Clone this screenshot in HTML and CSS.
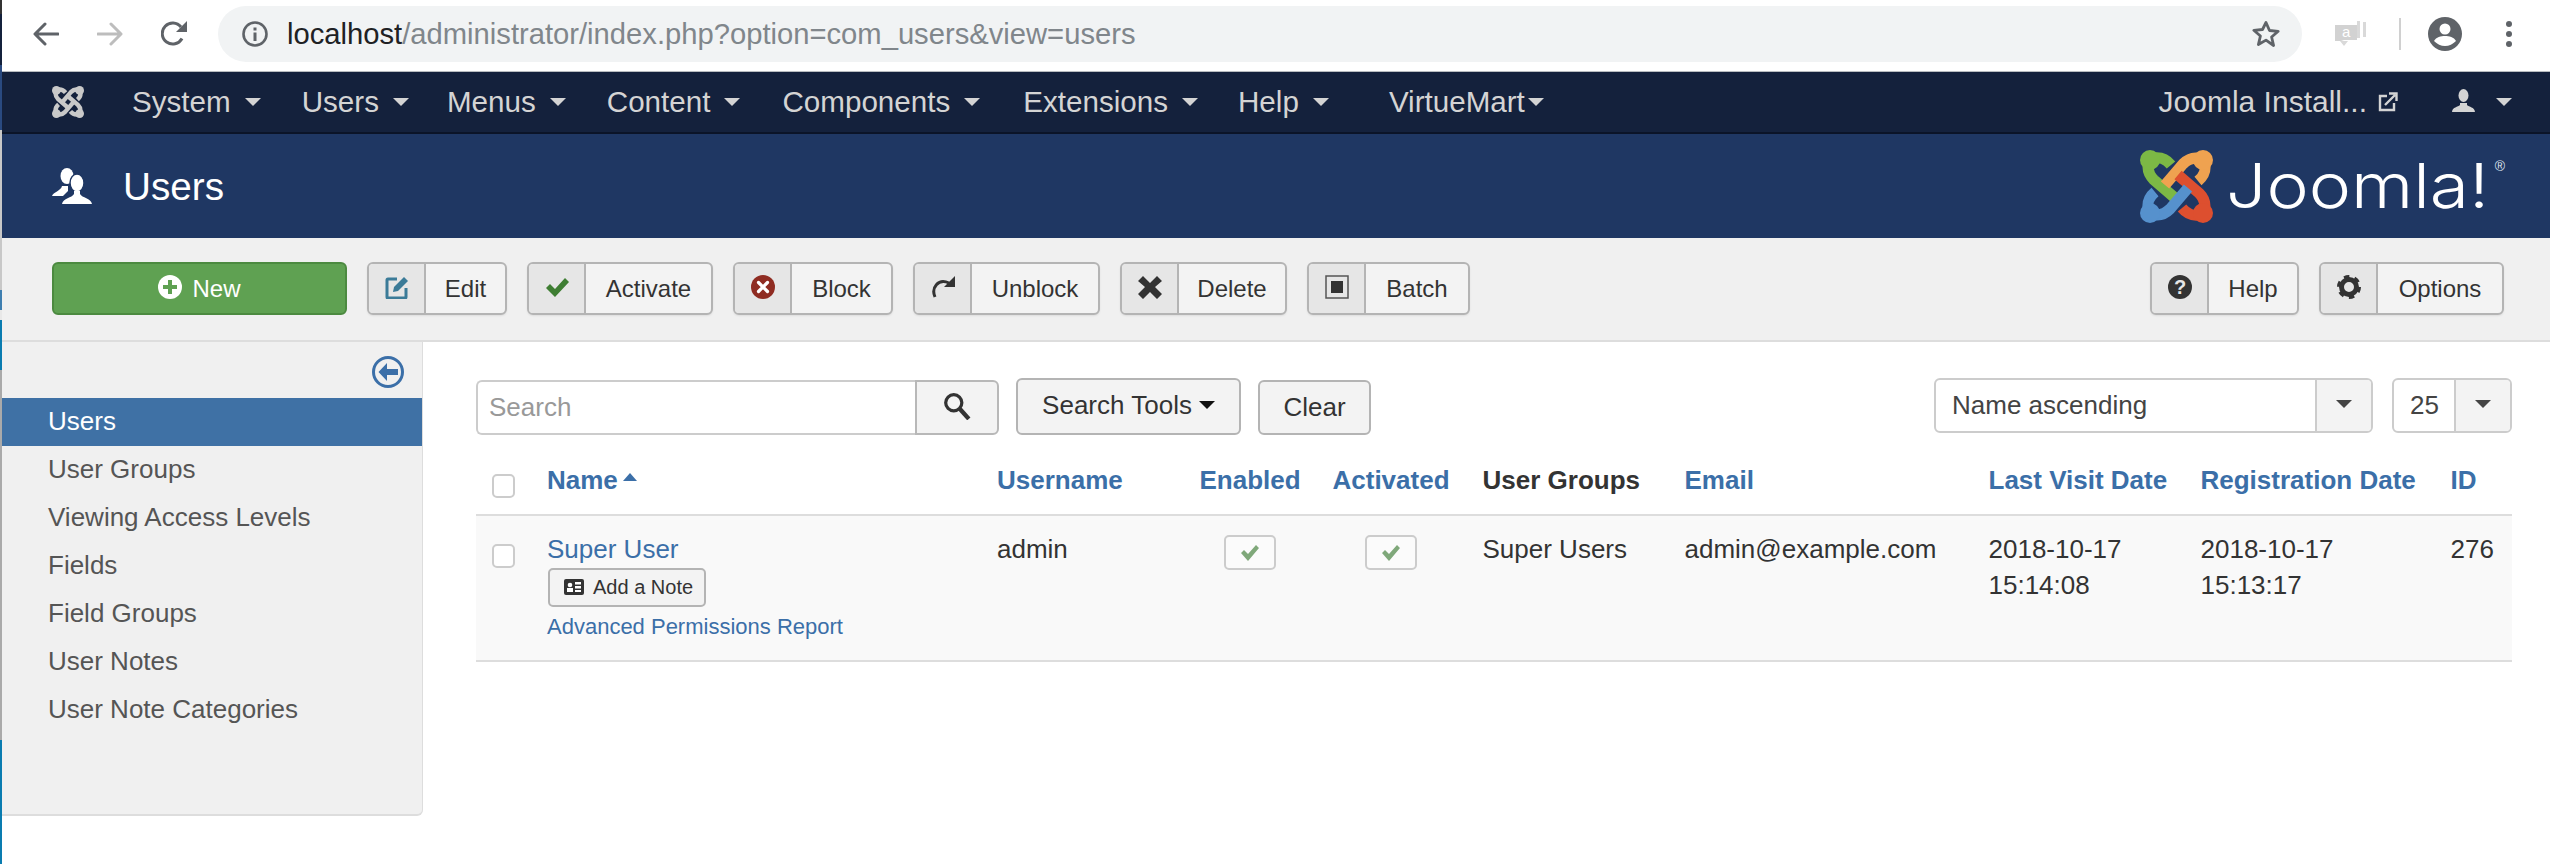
FILE: index.html
```html
<!DOCTYPE html>
<html lang="en">
<head>
<meta charset="utf-8">
<title>Users</title>
<link rel="stylesheet" href="styles.css">
</head>
<body>
<svg class="defs" width="0" height="0" aria-hidden="true">
  <defs>
    <g id="band"><path d="M10 9 C20 6 26 9 31 15 M10 9 C6 18 9 25 14 30 L35 48" fill="none" stroke-linecap="butt"/><circle cx="10" cy="10" r="10" stroke="none"/></g>
  </defs>
</svg>
<div class="page">
  <header class="chrome">
    <svg class="ci" viewBox="0 0 26 26"><path d="M25 13H3M12 3 2 13l10 10" fill="none" stroke="#5f6368" stroke-width="3" stroke-linecap="round" stroke-linejoin="round"/></svg>
    <svg class="ci" viewBox="0 0 26 26"><path d="M1 13h22M14 3l10 10-10 10" fill="none" stroke="#bdbdbd" stroke-width="3" stroke-linecap="round" stroke-linejoin="round"/></svg>
    <svg class="ci" viewBox="0 0 26 26"><path d="M21 17.500A10.500 10.500 0 1 1 20 6" fill="none" stroke="#5f6368" stroke-width="3"/><path d="M26 0v11H15z" fill="#5f6368"/></svg>
    <div class="pill">
      <svg class="info" viewBox="0 0 26 26"><circle cx="13" cy="13" r="11.500" fill="none" stroke="#5f6368" stroke-width="2.600"/><path d="M11.500 11.500h3V20h-3zM11.500 6.500h3v3h-3z" fill="#5f6368"/></svg>
      <div class="url"><span class="host">localhost</span>/administrator/index.php?option=com_users&amp;view=users</div>
      <svg class="star" viewBox="0 0 30 30"><path d="M15 3.500l3.500 8 8.700.8-6.600 5.700 2 8.500L15 21.100 7.400 25.500l2-8.500-6.600-5.700 8.700-.8z" fill="none" stroke="#5f6368" stroke-width="2.800" stroke-linejoin="round"/></svg>
    </div>
    <svg class="ext" viewBox="0 0 33 28"><path d="M2 5h22v15H11l-3 1H2z" fill="#d2d2d2"/><path d="M24 1h3v17h-3zM30 2h3v15h-3zM7 21h8l-4 5z" fill="#d9d9d9"/><text x="9" y="17" class="ext-a">a</text></svg>
    <div class="sep"></div>
    <svg class="avatar" viewBox="0 0 34 34"><circle cx="17" cy="17" r="17" fill="#5f6368"/><circle cx="17" cy="12" r="5.500" fill="#fff"/><path d="M6 24c2-4 7-5 11-5s9 1 11 5c-3 3-7 5-11 5s-8-2-11-5z" fill="#fff"/></svg>
    <div class="dots"><i></i><i></i><i></i></div>
  </header>

  <nav class="topnav">
    <svg class="nav-logo" viewBox="0 0 73 73"><g class="mono"><use href="#band"/><use href="#band" transform="rotate(90 36.500 36.500)"/><use href="#band" transform="rotate(180 36.500 36.500)"/><use href="#band" transform="rotate(270 36.500 36.500)"/></g></svg>
    <a class="nav-item">System<span class="caret"></span></a>
    <a class="nav-item nav-users">Users<span class="caret"></span></a>
    <a class="nav-item">Menus<span class="caret"></span></a>
    <a class="nav-item nav-content">Content<span class="caret"></span></a>
    <a class="nav-item nav-comp">Components<span class="caret"></span></a>
    <a class="nav-item nav-extn">Extensions<span class="caret"></span></a>
    <a class="nav-item nav-help">Help<span class="caret"></span></a>
    <a class="nav-item nav-vm">VirtueMart<span class="caret"></span></a>
    <div class="nav-right">
      <a class="nav-site">Joomla Install...
        <svg class="nav-ext" viewBox="0 0 20 20"><path d="M9 4H2v14h14v-7" fill="none" stroke="#d4d4d4" stroke-width="2.400"/><path d="M7 13 17 3M11 1.500h7.500V9" fill="none" stroke="#d4d4d4" stroke-width="2.400"/></svg>
      </a>
      <a class="nav-user">
        <svg class="nav-usericon" viewBox="0 0 23 23"><ellipse cx="11.500" cy="6.500" rx="5" ry="6.500" fill="#d4d4d4"/><path d="M0 23c.5-5 6-5 8-7v-2h7v2c2 2 7.500 2 8 7z" fill="#d4d4d4"/></svg>
        <span class="caret"></span>
      </a>
    </div>
  </nav>

  <div class="titlebar">
    <svg class="title-icon" viewBox="0 0 40 36"><ellipse cx="15" cy="8" rx="6.500" ry="8" fill="#fff"/><path d="M0 28c1-4 9-5 10-10h6v5l-5 5z" fill="#fff"/><ellipse cx="25" cy="15" rx="7" ry="9" fill="#fff" stroke="#1f3763" stroke-width="1.500"/><path d="M10 36c1-6 10-6 12-10v-3h6v3c2 4 11 4 12 10z" fill="#fff"/></svg>
    <h1 class="title">Users</h1>
    <div class="brand">
      <svg class="brand-mark" viewBox="0 0 73 73">
        <use href="#band" class="c-green"/>
        <use href="#band" class="c-orange" transform="rotate(90 36.500 36.500)"/>
        <use href="#band" class="c-red" transform="rotate(180 36.500 36.500)"/>
        <use href="#band" class="c-blue" transform="rotate(270 36.500 36.500)"/>
      </svg>
      <span class="brand-text">Joomla!</span><sup class="brand-r">®</sup>
    </div>
  </div>

  <div class="toolbar">
    <a class="btn-new">
      <svg class="new-icon" viewBox="0 0 24 24"><circle cx="12" cy="12" r="12" fill="#fff"/><path d="M10 5h4v5h5v4h-5v5h-4v-5H5v-4h5z" fill="#5fa152"/></svg>New
    </a>
    <a class="tbtn w-edit"><span class="ticon"><svg viewBox="0 0 24 24"><path d="M12 4H3a1 1 0 0 0-1 1v17a1 1 0 0 0 1 1h17a1 1 0 0 0 1-1v-9" fill="none" stroke="#3b7b98" stroke-width="3"/><path d="M8 17l1-5L19 2l4 4-10 10z" fill="#3b7b98"/></svg></span><span class="tlabel">Edit</span></a>
    <a class="tbtn w-activate"><span class="ticon"><svg viewBox="0 0 24 24"><path d="M1 13l4-4 5 5L20 3l4 4-14 15z" fill="#3f7e33"/></svg></span><span class="tlabel">Activate</span></a>
    <a class="tbtn w-block"><span class="ticon"><svg viewBox="0 0 24 24"><circle cx="12" cy="12" r="12" fill="#8f2c22"/><path d="M7.500 7.500l9 9m0-9-9 9" stroke="#fff" stroke-width="3.200" stroke-linecap="round"/></svg></span><span class="tlabel">Block</span></a>
    <a class="tbtn w-unblock"><span class="ticon"><svg viewBox="0 0 24 24"><path d="M4 22C0 13 7 3 18 8" fill="none" stroke="#333" stroke-width="3"/><path d="M13 12h11V1z" fill="#333"/></svg></span><span class="tlabel">Unblock</span></a>
    <a class="tbtn w-delete"><span class="ticon"><svg viewBox="0 0 24 24"><path d="M5 1l7 7 7-7 5 5-7 6 7 7-5 5-7-7-7 7-5-5 7-7-7-6z" fill="#333"/></svg></span><span class="tlabel">Delete</span></a>
    <a class="tbtn w-batch"><span class="ticon"><svg viewBox="0 0 24 24"><rect x="1" y="1" width="22" height="22" fill="none" stroke="#555" stroke-width="1.500"/><rect x="6" y="6" width="12" height="12" fill="#333"/></svg></span><span class="tlabel">Batch</span></a>
    <div class="toolbar-right">
      <a class="tbtn w-help"><span class="ticon"><svg viewBox="0 0 24 24"><circle cx="12" cy="12" r="12" fill="#333"/><text x="12" y="19" class="q">?</text></svg></span><span class="tlabel">Help</span></a>
      <a class="tbtn w-options"><span class="ticon"><svg viewBox="0 0 24 24"><circle cx="12" cy="12" r="7.500" fill="none" stroke="#333" stroke-width="5"/><circle cx="12" cy="12" r="10.500" fill="none" stroke="#333" stroke-width="3" stroke-dasharray="5.500 5.500"/></svg></span><span class="tlabel">Options</span></a>
    </div>
  </div>

  <div class="main">
    <aside class="sidebar">
      <div class="side-head">
        <svg class="collapse" viewBox="0 0 32 32"><circle cx="16" cy="16" r="14.500" fill="none" stroke="#3b6fa8" stroke-width="3"/><path d="M15 7 6.500 16l8.500 9v-6h11v-6H15z" fill="#3b6fa8"/></svg>
      </div>
      <a class="side-item active">Users</a>
      <a class="side-item">User Groups</a>
      <a class="side-item">Viewing Access Levels</a>
      <a class="side-item">Fields</a>
      <a class="side-item">Field Groups</a>
      <a class="side-item">User Notes</a>
      <a class="side-item">User Note Categories</a>
    </aside>
    <section class="content">
      <div class="filters">
        <div class="search">
          <input class="search-input" type="text" placeholder="Search">
          <button class="search-btn" type="button"><svg viewBox="0 0 26 26"><circle cx="10" cy="10" r="7.500" fill="none" stroke="#333" stroke-width="3"/><path d="M15.500 15.500 24 25" stroke="#333" stroke-width="4"/></svg></button>
        </div>
        <button class="fbtn fbtn-tools" type="button">Search Tools<span class="caret caret-dark"></span></button>
        <button class="fbtn fbtn-clear" type="button">Clear</button>
        <div class="select select-sort"><span class="sel-value">Name ascending</span><span class="sel-arrow"><span class="caret caret-grey"></span></span></div>
        <div class="select select-limit"><span class="sel-value">25</span><span class="sel-arrow"><span class="caret caret-grey"></span></span></div>
      </div>
      <table class="grid">
        <colgroup>
          <col class="c1"><col class="c2"><col class="c3"><col class="c4"><col class="c5"><col class="c6"><col class="c7"><col class="c8"><col class="c9"><col class="c10">
        </colgroup>
        <thead>
          <tr>
            <th class="chk-cell"><input class="chk" type="checkbox"></th>
            <th><a>Name<span class="caret caret-up"></span></a></th>
            <th><a>Username</a></th>
            <th><a>Enabled</a></th>
            <th><a>Activated</a></th>
            <th>User Groups</th>
            <th><a>Email</a></th>
            <th><a>Last Visit Date</a></th>
            <th><a>Registration Date</a></th>
            <th><a>ID</a></th>
          </tr>
        </thead>
        <tbody>
          <tr>
            <td class="chk-cell"><input class="chk" type="checkbox"></td>
            <td>
              <a>Super User</a>
              <div class="note-row"><span class="note-btn"><svg viewBox="0 0 20 16"><rect width="20" height="16" rx="2" fill="#333"/><rect x="11" y="3" width="6" height="2.500" fill="#fff"/><rect x="11" y="7" width="6" height="2.500" fill="#fff"/><rect x="11" y="11" width="6" height="2" fill="#fff"/><circle cx="6" cy="6" r="2.300" fill="#fff"/><rect x="3" y="9" width="6" height="4" fill="#fff"/></svg>Add a Note</span></div>
              <a class="perm">Advanced Permissions Report</a>
            </td>
            <td>admin</td>
            <td><span class="state state-en"><svg viewBox="0 0 20 18"><path d="M1 9l3-3 4 4 8-9 3 3L8 17z" fill="#7fa87a"/></svg></span></td>
            <td><span class="state state-ac"><svg viewBox="0 0 20 18"><path d="M1 9l3-3 4 4 8-9 3 3L8 17z" fill="#7fa87a"/></svg></span></td>
            <td>Super Users</td>
            <td>admin@example.com</td>
            <td>2018-10-17<br>15:14:08</td>
            <td>2018-10-17<br>15:13:17</td>
            <td>276</td>
          </tr>
        </tbody>
      </table>
    </section>
  </div>
</div>
</body>
</html>
```

FILE: styles.css
```css
* { box-sizing: border-box; }
html, body { margin: 0; height: 864px; overflow: hidden; }
body {
  font-family: "Liberation Sans", Arial, sans-serif;
  color: #333;
  background: linear-gradient(to bottom,
    #333 0 14px, #14213c 14px 65px, #2a4a80 65px 130px, #c8c8c8 130px 290px,
    #3f7fb0 290px 310px, #e8e8e8 310px 320px, #0a7cb0 320px 370px,
    #aaa 370px 740px, #0a7cb0 740px 864px);
}
.defs { position: absolute; }
.page { margin-left: 2px; height: 864px; background: #fff; }
a { display: inline; }

/* browser chrome */
.chrome { display: flex; align-items: center; height: 72px; padding: 0 0 4px 31px; border-bottom: 1px solid #b8bcc0; background: #fff; }
.ci { width: 26px; height: 26px; margin-right: 38px; flex: none; }
.ci:nth-child(3) { margin-right: 31px; }
.pill { display: flex; align-items: center; width: 2084px; height: 56px; padding: 0 21px 0 24px; border-radius: 28px; background: #f1f3f4; }
.info { width: 26px; height: 26px; margin-right: 19px; flex: none; }
.url { flex: 1; padding-top: 2px; font-size: 29.200px; color: #80868b; white-space: nowrap; }
.host { color: #202124; }
.star { width: 30px; height: 30px; flex: none; }
.ext { width: 33px; height: 28px; margin-left: 31px; flex: none; }
.ext-a { font-family: "Liberation Sans", sans-serif; font-size: 15px; fill: #fff; }
.sep { width: 2px; height: 32px; margin-left: 33px; background: #d0d0d0; }
.avatar { width: 34px; height: 34px; margin-left: 27px; flex: none; }
.dots { display: flex; flex-direction: column; gap: 4px; margin-left: 44px; }
.dots i { width: 6px; height: 6px; border-radius: 50%; background: #5f6368; }

/* top nav */
.topnav { display: flex; align-items: center; height: 62px; padding: 0 38px 0 50px; border-bottom: 2px solid #0b1428; background: #14213c; color: #d4d4d4; font-size: 29.600px; }
.nav-logo { width: 32px; height: 32px; margin-right: 48px; flex: none; }
.mono { fill: #c9c9c9; stroke: #c9c9c9; stroke-width: 10; }
.nav-item { display: flex; align-items: center; margin-right: 41px; }
.nav-users { margin-right: 38px; }
.nav-content { margin-right: 42px; }
.nav-comp { margin-right: 43px; }
.nav-extn { margin-right: 40px; }
.nav-help { margin-right: 60px; }
.nav-vm { margin-right: 0; }
.nav-vm .caret { margin-left: 3px; }
.caret { display: inline-block; width: 0; height: 0; margin-left: 14px; border-left: 8px solid transparent; border-right: 8px solid transparent; border-top: 8px solid #d4d4d4; }
.nav-right { display: flex; align-items: center; margin-left: auto; }
.nav-site { display: flex; align-items: center; gap: 11px; font-size: 30px; }
.nav-ext { width: 20px; height: 20px; }
.nav-user { display: flex; align-items: center; margin-left: 54px; }
.nav-usericon { width: 23px; height: 23px; margin-top: -4px; }
.nav-user .caret { margin-left: 21px; }

/* title bar */
.titlebar { display: flex; align-items: center; height: 104px; padding: 0 48px 0 50px; background: #1f3763; color: #fff; }
.title-icon { width: 40px; height: 36px; flex: none; margin: 0 31px 0 0; }
.title { margin: 0; padding-top: 3px; font-size: 38.700px; font-weight: 400; line-height: 1; }
.brand { position: relative; display: flex; align-items: center; margin-left: auto; }
.brand-mark { width: 73px; height: 73px; flex: none; margin-right: 13px; }
.c-green { fill: #7cb845; stroke: #7cb845; stroke-width: 11; }
.c-orange { fill: #efa250; stroke: #efa250; stroke-width: 11; }
.c-red { fill: #dd4f2f; stroke: #dd4f2f; stroke-width: 11; }
.c-blue { fill: #5691cd; stroke: #5691cd; stroke-width: 11; }
.brand-text { width: 276px; font-family: Inter, "Open Sans", sans-serif; font-weight: 300; font-size: 62px; line-height: 1; white-space: nowrap; transform: scaleX(1.150); transform-origin: left center; }
.brand-r { position: absolute; top: 9px; right: -3px; font-size: 14px; line-height: 1; color: #dfe4ee; }

/* toolbar */
.toolbar { display: flex; align-items: flex-start; gap: 20px; height: 104px; padding: 24px 46px 0 50px; border-bottom: 2px solid #ddd; background: #f0f0f0; }
.btn-new { display: flex; align-items: center; justify-content: center; gap: 10px; flex: none; width: 295px; height: 53px; border: 2px solid #4c8a40; border-radius: 6px; background: #5fa152; color: #fff; font-size: 24px; }
.new-icon { width: 24px; height: 24px; margin-top: -4px; }
.tbtn { display: flex; flex: none; height: 53px; border: 2px solid #b4b4b4; border-radius: 6px; overflow: hidden; background: #f3f3f3; font-size: 24px; box-shadow: 0 1px 2px rgba(0,0,0,.08); }
.w-edit { width: 140px; }
.w-activate { width: 186px; }
.w-block { width: 160px; }
.w-unblock { width: 187px; }
.w-delete { width: 167px; }
.w-batch { width: 163px; }
.w-help { width: 149px; }
.w-options { width: 185px; }
.ticon { display: flex; align-items: center; justify-content: center; flex: none; width: 57px; padding-bottom: 4px; border-right: 2px solid #b4b4b4; background: #e6e6e6; }
.ticon svg { width: 24px; height: 24px; }
.tlabel { display: flex; align-items: center; justify-content: center; flex: 1; }
.q { font-family: "Liberation Sans", sans-serif; font-size: 20px; font-weight: 700; fill: #e6e6e6; text-anchor: middle; }
.toolbar-right { display: flex; gap: 20px; margin-left: auto; }

/* main */
.main { display: flex; align-items: flex-start; }
.sidebar { flex: none; width: 421px; height: 474px; border-right: 1px solid #ddd; border-bottom: 2px solid #ddd; border-bottom-right-radius: 6px; background: #f0f0f0; font-size: 26px; color: #555; }
.side-head { display: flex; justify-content: flex-end; height: 56px; padding: 14px 18px 0 0; }
.collapse { width: 32px; height: 32px; }
.side-item { display: flex; align-items: center; height: 48px; padding: 0 0 2px 46px; }
.side-item.active { background: #3f71a5; color: #fff; }

.content { flex: 1; padding: 36px 38px 0 53px; font-size: 26px; }
.filters { display: flex; align-items: flex-start; height: 57px; font-size: 26px; }
.search { display: flex; margin-top: 2px; }
.search-input { width: 439px; height: 55px; padding: 0 11px; border: 2px solid #ccc; border-right: 0; border-radius: 6px 0 0 6px; background: #fff; font: inherit; color: #333; outline: 0; }
.search-input::placeholder { color: #999; opacity: 1; }
.search-btn { display: flex; align-items: center; justify-content: center; width: 84px; height: 55px; padding: 0 0 4px; border: 2px solid #b8b8b8; border-radius: 0 6px 6px 0; background: #f3f3f3; }
.search-btn svg { width: 28px; height: 28px; }
.fbtn { height: 57px; border: 2px solid #b4b4b4; border-radius: 6px; background: #f3f3f3; font: inherit; color: #333; padding: 0; }
.fbtn-tools { display: flex; align-items: center; justify-content: center; width: 225px; margin-left: 17px; padding-bottom: 3px; }
.fbtn-clear { width: 113px; height: 55px; margin: 2px 0 0 17px; }
.caret-dark { margin-left: 7px; border-top-color: #111; }
.caret-grey { margin: 0; border-top-color: #444; }
.select { display: flex; height: 55px; border: 2px solid #ccc; border-radius: 6px; overflow: hidden; background: #fff; }
.select-sort { width: 439px; margin-left: auto; }
.select-limit { width: 120px; margin-left: 19px; }
.sel-value { flex: 1; padding: 0 0 3px 16px; line-height: 50px; color: #444; }
.sel-arrow { display: flex; align-items: center; justify-content: center; width: 56px; padding-bottom: 3px; border-left: 2px solid #ccc; background: #f3f3f3; }

/* table */
.grid { width: 2036px; margin-top: 16px; border-collapse: collapse; table-layout: fixed; }
.c1 { width: 58px; } .c2 { width: 450px; } .c3 { width: 202.500px; } .c4 { width: 133px; } .c5 { width: 150px; }
.c6 { width: 202px; } .c7 { width: 304px; } .c8 { width: 212px; } .c9 { width: 250px; } .c10 { width: 74.500px; }
.grid th { height: 64px; padding: 0 13px 5px; border-bottom: 2px solid #ddd; text-align: left; font-weight: 700; white-space: nowrap; }
.grid td { height: 146px; padding: 15px 13px 0; border-bottom: 2px solid #ddd; background: #f9f9f9; line-height: 36px; vertical-align: top; }
.grid a { color: #3b6fa8; }
.grid th .caret-up { display: inline-block; margin: 0 0 9px 5px; vertical-align: middle; border-top: 0; border-left-width: 7.500px; border-right-width: 7.500px; border-bottom: 8px solid #3b6fa8; }
.grid .chk-cell { padding-left: 16px; padding-right: 0; }
.grid th.chk-cell { padding-top: 6px; padding-bottom: 0; }
.chk { display: block; width: 23px; height: 24px; margin: 0; appearance: none; border: 2px solid #ccc; border-radius: 5px; background: #fff; }
td.chk-cell .chk { margin-top: 13px; }
.note-row { display: block; line-height: 0; margin-top: 1px; }
.note-btn { display: inline-flex; align-items: center; gap: 9px; height: 39px; padding: 0 11px 2px 14px; margin-left: 1px; border: 2px solid #b4b4b4; border-radius: 5px; background: #f3f3f3; font-size: 20px; line-height: 1; color: #333; }
.note-btn svg { width: 20px; height: 16px; }
.perm { display: block; margin-top: 5px; font-size: 22px; line-height: 30px; }
.state { display: flex; align-items: center; justify-content: center; width: 52px; height: 35px; border: 2px solid #ccc; border-radius: 5px; background: #fbfbfb; }
.state svg { width: 20px; height: 18px; }
.state-en { margin: 4px 0 0 24px; }
.state-ac { margin: 4px 0 0 32px; }
```
